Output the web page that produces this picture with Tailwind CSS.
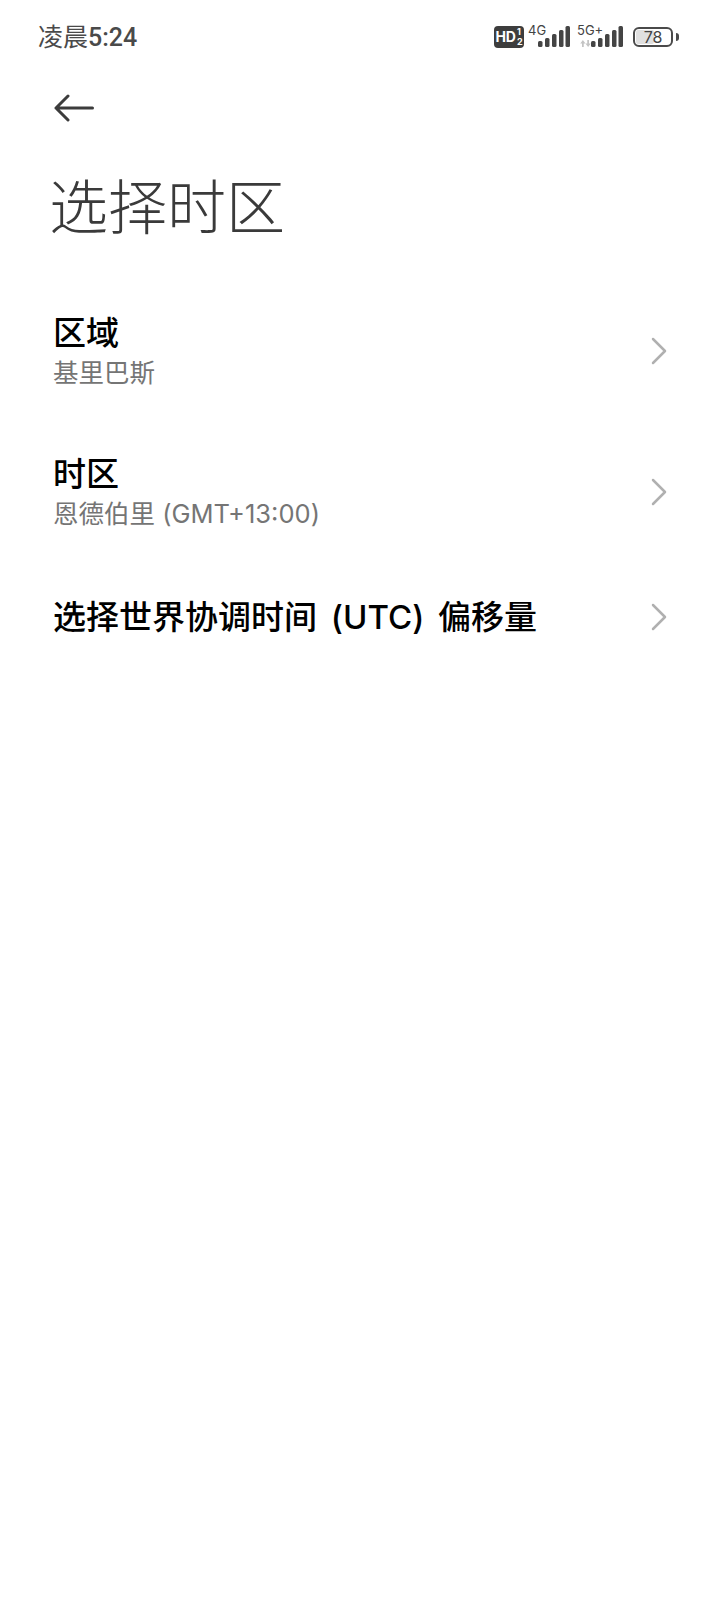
<!DOCTYPE html>
<html lang="zh-CN">
<head>
    <meta charset="UTF-8">
    <meta name="viewport" content="width=device-width, initial-scale=1.0">
    <script src="https://cdn.jsdelivr.net/npm/@tailwindcss/browser@4"></script>
    <title>选择时区</title>
</head>
<body class="bg-white h-[1600px] w-[720px] overflow-hidden font-['Inter','Noto_Sans_CJK_SC',sans-serif]">

    <!-- status bar -->
    <div class="flex h-[74px] items-center justify-between pl-[38px] pr-[41px]">
        <span class="font-['Roboto','Noto_Sans_CJK_SC',sans-serif] text-[25px] leading-none text-[#4a4a4a]">凌晨<span class="font-medium">5:24</span></span>
        <div class="flex items-center">
            <div class="flex h-[22px] w-[30px] items-center justify-center gap-px rounded-[4px] bg-[#3d3d3d] text-white">
                <span class="text-[14px] leading-none font-bold">HD</span>
                <span class="flex flex-col text-[9px] leading-[10px] font-bold"><span>1</span><span>2</span></span>
            </div>
            <div class="relative ml-[4px] h-[24px] w-[42px]">
                <span class="absolute top-[-1px] left-0 text-[13px] leading-none text-[#444]">4G</span>
                <svg class="absolute right-0 bottom-[2px]" width="32" height="21" viewBox="0 0 32 21" fill="#444">
                    <rect x="0" y="15" width="4.500" height="6" rx="1.500"/>
                    <rect x="7" y="12" width="4.500" height="9" rx="1.500"/>
                    <rect x="14" y="8" width="4.500" height="13" rx="1.500"/>
                    <rect x="21" y="4" width="4.500" height="17" rx="1.500"/>
                    <rect x="27.500" y="0" width="4.500" height="21" rx="1.500"/>
                </svg>
            </div>
            <div class="relative ml-[7px] h-[24px] w-[46px]">
                <span class="absolute top-[-1px] left-0 text-[13px] leading-none text-[#444]">5G+</span>
                <svg class="absolute bottom-[2px] left-[3px]" width="11" height="7" viewBox="0 0 12 8" fill="#c4c4c4">
                    <path d="M3 0l3 4H4v4H2V4H0zM9 8L6 4h2V0h2v4h2z"/>
                </svg>
                <svg class="absolute right-0 bottom-[2px]" width="32" height="21" viewBox="0 0 32 21" fill="#444">
                    <rect x="0" y="15" width="4.500" height="6" rx="1.500"/>
                    <rect x="7" y="12" width="4.500" height="9" rx="1.500"/>
                    <rect x="14" y="8" width="4.500" height="13" rx="1.500"/>
                    <rect x="21" y="4" width="4.500" height="17" rx="1.500"/>
                    <rect x="27.500" y="0" width="4.500" height="21" rx="1.500"/>
                </svg>
            </div>
            <div class="ml-[10px] flex items-center gap-[3px]">
                <div class="relative flex h-[20px] w-[40px] items-center justify-center overflow-hidden rounded-[6px] border-2 border-[#4a4a4a]">
                    <div class="absolute inset-y-[1px] left-[1px] w-[18px] rounded-[2px] bg-[#e0e0e0]"></div>
                    <span class="relative text-[16px] leading-none text-[#444]">78</span>
                </div>
                <div class="h-[8px] w-[3px] rounded-r-sm bg-[#4a4a4a]"></div>
            </div>
        </div>
    </div>

    <!-- back button -->
    <div class="flex h-[68px] items-center pl-[54px]">
        <svg width="40" height="28" viewBox="0 0 40 28" fill="none" stroke="#3c3c3c" stroke-width="3" stroke-linecap="round" stroke-linejoin="round">
            <path d="M38.500 14H2M14 2L2 14l12 12"/>
        </svg>
    </div>

    <h1 class="mt-[31px] pl-[49px] text-[59px] leading-[70px] font-light text-[#3a3a3a]">选择时区</h1>

    <div class="mt-[48px]">
        <div class="flex h-[120px] items-center justify-between pr-[53px] pl-[53px]">
            <div>
                <div class="text-[33px] leading-[40px] font-medium text-black">区域</div>
                <div class="mt-[3px] text-[25.500px] leading-[34px] text-[#757575]">基里巴斯</div>
            </div>
            <svg width="16" height="28" viewBox="0 0 16 28" fill="none" stroke="#b0b0b0" stroke-width="2.500" stroke-linecap="round" stroke-linejoin="round"><path d="M2 2l12 12L2 26"/></svg>
        </div>
        <div class="mt-[21px] flex h-[120px] items-center justify-between pr-[53px] pl-[53px]">
            <div>
                <div class="text-[33px] leading-[40px] font-medium text-black">时区</div>
                <div class="mt-[3px] text-[25.500px] leading-[34px] text-[#757575]">恩德伯里 (GMT+13:00)</div>
            </div>
            <svg width="16" height="28" viewBox="0 0 16 28" fill="none" stroke="#b0b0b0" stroke-width="2.500" stroke-linecap="round" stroke-linejoin="round"><path d="M2 2l12 12L2 26"/></svg>
        </div>
        <div class="flex h-[130px] items-center justify-between pr-[53px] pl-[53px]">
            <div class="text-[33px] leading-[40px] font-medium text-black [word-spacing:5px]">选择世界协调时间 (UTC) 偏移量</div>
            <svg width="16" height="28" viewBox="0 0 16 28" fill="none" stroke="#b0b0b0" stroke-width="2.500" stroke-linecap="round" stroke-linejoin="round"><path d="M2 2l12 12L2 26"/></svg>
        </div>
    </div>

</body>
</html>
